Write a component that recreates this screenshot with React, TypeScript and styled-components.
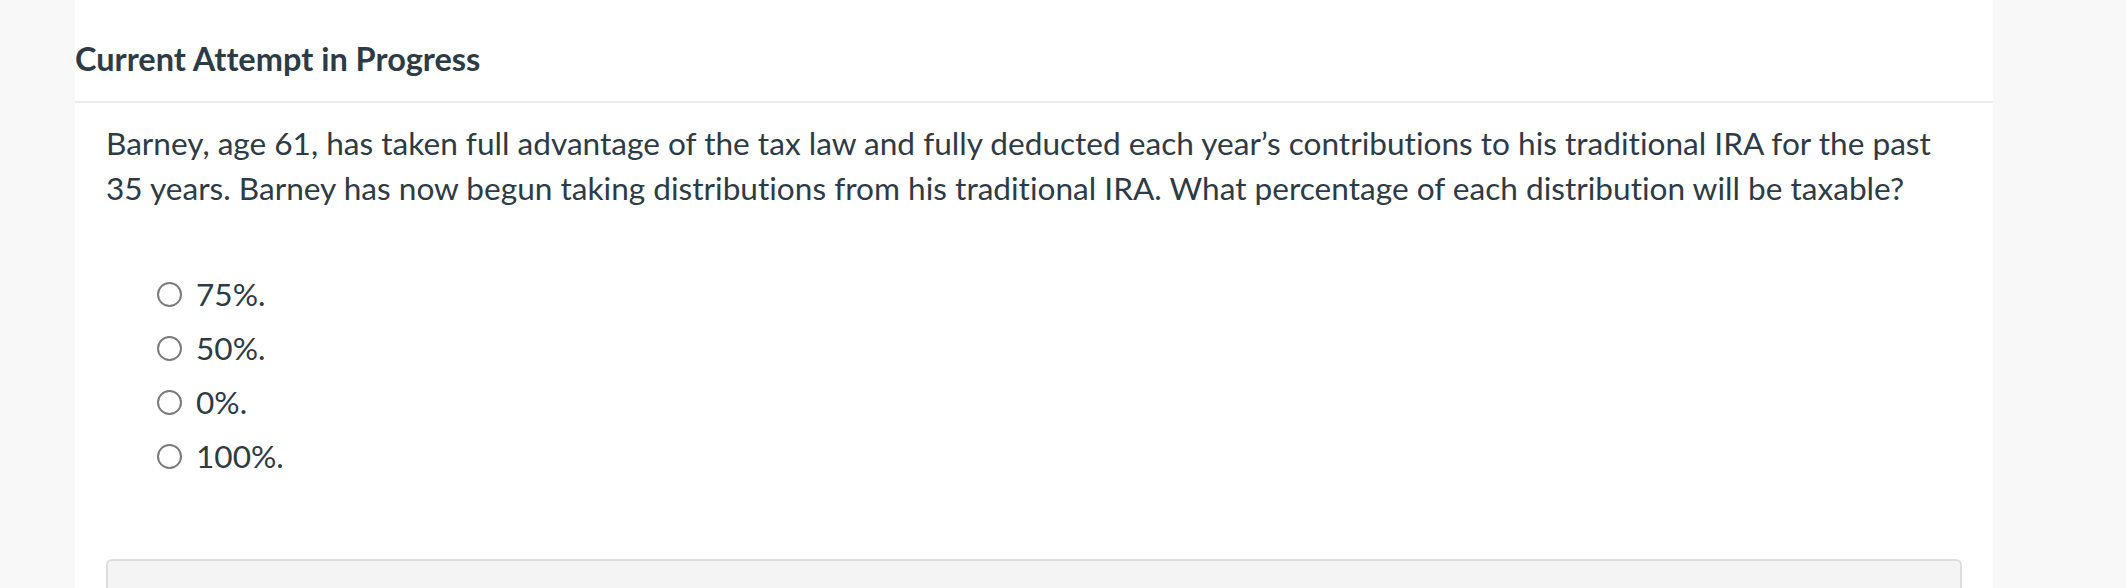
import React from 'react';
import styled, { createGlobalStyle } from 'styled-components';

const GlobalStyle = createGlobalStyle`
  html, body {
    margin: 0;
    padding: 0;
    background: #f8f8f8;
    font-family: Lato, 'Open Sans', 'Liberation Sans', sans-serif;
    color: #2d3b45;
    font-variant-ligatures: no-common-ligatures;
  }
`;

const OPTIONS = ['75%.', '50%.', '0%.', '100%.'];

const App: React.FC = () => {
  return (
    <>
      <GlobalStyle />
      <Page>
        <Panel>
          <Header>
            <Title>Current Attempt in Progress</Title>
          </Header>
          <Body>
            <Question>
              Barney, age 61, has taken full advantage of the tax law and fully deducted each year’s contributions to his
              traditional IRA for the past 35 years. Barney has now begun taking distributions from his traditional IRA.
              What percentage of each distribution will be taxable?
            </Question>
            <OptionList>
              {OPTIONS.map((opt) => (
                <Option key={opt}>
                  <Radio type="radio" name="answer" />
                  <OptionLabel>{opt}</OptionLabel>
                </Option>
              ))}
            </OptionList>
            <AnswerBox />
          </Body>
        </Panel>
      </Page>
    </>
  );
};

// --- Styled Components ---

const Page = styled.div`
  width: 2126px;
  height: 588px;
  overflow: hidden;
  background: #f8f8f8;
`;

const Panel = styled.div`
  margin-left: 75px;
  width: 1918px;
  height: 588px;
  background: #ffffff;
`;

const Header = styled.div`
  padding: 39px 0 22px;
  border-bottom: 2px solid #ececec;
`;

const Title = styled.h2`
  margin: 0;
  font-size: 32.5px;
  line-height: 40px;
  font-weight: 700;
  color: #2d3b45;
`;

const Body = styled.div`
  padding: 18px 31px 0;
`;

const Question = styled.p`
  margin: 0;
  max-width: 1845px;
  font-size: 31.6px;
  line-height: 45px;
  color: #2d3b45;
`;

const OptionList = styled.ul`
  list-style: none;
  margin: 56px 0 0;
  padding: 0 0 0 51px;
`;

const Option = styled.li`
  display: flex;
  align-items: center;
  height: 54px;
  gap: 14px;
`;

const Radio = styled.input`
  appearance: none;
  margin: 0;
  width: 25px;
  height: 25px;
  border: 2px solid #7a7a7a;
  border-radius: 50%;
  background: #fff;
  flex-shrink: 0;
`;

const OptionLabel = styled.span`
  font-size: 31.6px;
  line-height: 45px;
  color: #2d3b45;
`;

const AnswerBox = styled.div`
  margin-top: 76px;
  height: 80px;
  background: #f4f4f4;
  border: 2px solid #dedede;
  border-radius: 6px;
`;

export default App;
